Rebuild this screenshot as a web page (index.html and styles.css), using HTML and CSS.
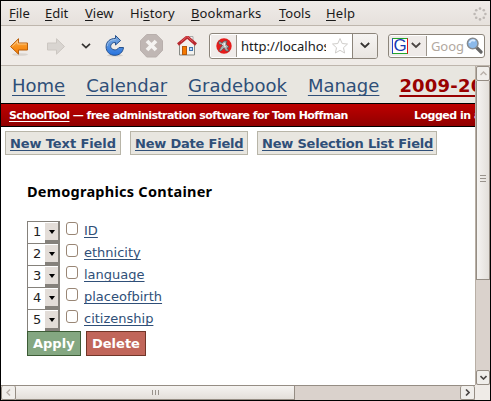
FILE: index.html
```html
<!DOCTYPE html>
<html lang="en">
<head>
<meta charset="utf-8">
<title>Demographics Container</title>
<link rel="stylesheet" href="styles.css">
</head>
<body>
<div class="window">
  <div class="menubar">
    <span class="m-file"><u>F</u>ile</span><span class="m-edit"><u>E</u>dit</span><span class="m-view"><u>V</u>iew</span><span class="m-history">Hi<u>s</u>tory</span><span class="m-bookmarks"><u>B</u>ookmarks</span><span class="m-tools"><u>T</u>ools</span><span class="m-help"><u>H</u>elp</span>
    <svg class="throbber" width="14" height="14" viewBox="-7 -7 14 14"><g fill="#bdb8b4"><circle cy="-5.4" r="1.3"/><circle cx="3.8" cy="-3.8" r="1.3"/><circle cx="5.4" r="1.3"/><circle cx="3.8" cy="3.8" r="1.3"/><circle cy="5.4" r="1.3"/><circle cx="-3.8" cy="3.8" r="1.3"/><circle cx="-5.4" r="1.3"/><circle cx="-3.8" cy="-3.8" r="1.3"/></g></svg>
  </div>
  <div class="toolbar">
    <svg class="nav-icons" width="200" height="39" viewBox="1 26 200 39">
      <defs>
        <linearGradient id="or" x2="0" y2="1"><stop stop-color="#fdb55b"/><stop offset=".5" stop-color="#f8921e"/><stop offset="1" stop-color="#f57900"/></linearGradient>
        <linearGradient id="bl" x2="0" y2="1"><stop stop-color="#83aede"/><stop offset="1" stop-color="#2673e0"/></linearGradient>
      </defs>
      <ellipse cx="20" cy="54.5" rx="8" ry="1.3" fill="#d9d4cf"/>
      <path d="M10.5 46.5L18.5 38.7V43H27.5V50H18.5V54.2Z" fill="url(#or)" stroke="#b85f0c" stroke-linejoin="round"/>
      <path d="M12.3 46.3L17.6 41.2V44H26.5" fill="none" stroke="#fdcf92" stroke-width=".8"/>
      <path d="M64.500 46.500L56.500 38.700V43H47.500V50H56.500V54.200Z" fill="#d9d5d1" stroke="#ccc7c2" stroke-linejoin="round"/>
      <path d="M82 43.800L86 47.600L90 43.800" fill="none" stroke="#353331" stroke-width="1.700"/>
      <ellipse cx="115" cy="55.300" rx="8" ry="1.200" fill="#d4cfca"/>
      <path d="M115.500 35.500L120.600 40.500L115.500 45V42.500C112 42 110.500 44.800 110.700 46.500C111 50 116.500 51.500 119 47.500H123.500C123 52.500 119 55.300 115 55.300C109.500 55.300 106 51.500 106.100 46.700C106.200 41.500 110 38.500 115.500 38.400Z" fill="url(#bl)" stroke="#28528d" stroke-linejoin="round"/>
      <path d="M107.300 46C107.600 42 110.500 39.700 116 39.500" fill="none" stroke="#a6c4e7" stroke-width=".8"/>
      <path d="M146.700 34.500H156.300L162.500 40.700V50.300L156.300 57H146.700L140.500 50.300V40.700Z" fill="#c0b7b4" stroke="#b8afac"/>
      <path d="M147 41L156 50M156 41L147 50" stroke="#f5f3f1" stroke-width="3.800"/>
      <path d="M189.500 41V36.500H193V43" fill="#f3f3f1" stroke="#aaa"/>
      <path d="M179.500 44L187 38L194.500 44V55H179.500Z" fill="#f3f2ef" stroke="#888a85"/>
      <path d="M178 44.500L186.500 37.500H188L196 44.500" fill="none" stroke="#b9282e" stroke-width="3"/>
      <path d="M181 41.800L186.500 37H188L193 41.800" fill="none" stroke="#e05a5e"/>
      <rect x="182.500" y="46.500" width="4" height="8" fill="#f57900" stroke="#b65a0c"/>
      <rect x="189.500" y="47.500" width="3" height="3" fill="#b7d8fa" stroke="#3f74ad"/>
    </svg>
    <div class="address">
      <div class="favicon"><svg width="16" height="16" viewBox="0 0 16 16"><circle cx="8" cy="8" r="7.700" fill="#e51c1c"/><path d="M3 3L6 5L8 3L11 3L10 6L13 9L11 10L13 13L10 13L8 10L5 13L3 13L5 9L7 7L3 6Z" fill="#aaa" stroke="#555" stroke-width=".7"/><path d="M6 7L9 5L8 8L10 9" fill="none" stroke="#eee"/></svg></div>
      <span class="url">http://localhost</span>
      <svg class="star" width="18" height="18" viewBox="0 0 18 18"><path d="M9 1.500L11.200 6.500L16.500 7L12.500 10.700L13.600 16L9 13.300L4.400 16L5.500 10.700L1.500 7L6.800 6.500Z" fill="#fff" stroke="#cfcdca"/></svg>
      <div class="drop"><svg width="10" height="7" viewBox="0 0 10 7"><path d="M.8 1L5 5L9.200 1" fill="none" stroke="#353331" stroke-width="1.800"/></svg></div>
    </div>
    <div class="search">
      <div class="engine">
        <span class="glogo">G</span>
        <svg width="10" height="7" viewBox="0 0 10 7"><path d="M.8 1L5 5L9.200 1" fill="none" stroke="#4a4543" stroke-width="1.800"/></svg>
      </div>
      <span class="hint">Goog</span>
      <svg class="lens" width="17" height="17" viewBox="0 0 17 17"><path d="M10.500 10.500L15 15" stroke="#666" stroke-width="3.200" stroke-linecap="round"/><circle cx="6.700" cy="6.500" r="5.300" fill="#8bb9ea" stroke="#858a90" stroke-width="1.500"/><path d="M3.500 6C4 3.500 7 2.500 9 4" fill="none" stroke="#d9eaff" stroke-width="1.800"/></svg>
    </div>
  </div>
  <div class="viewport">
    <div class="page">
      <div class="sections"><a class="s-home">Home</a><a class="s-cal">Calendar</a><a class="s-grade">Gradebook</a><a class="s-manage">Manage</a><a class="s-year">2009-2010</a></div>
      <div class="banner"><span class="tagline"><a>SchoolTool</a> — free administration software for Tom Hoffman</span><span class="login">Logged in as</span></div>
      <div class="actions"><div class="action a-text"><a>New Text Field</a></div><div class="action a-date"><a>New Date Field</a></div><div class="action a-list"><a>New Selection List Field</a></div></div>
      <div class="content">
        <h1><span>Demographics Container</span></h1>
        <div class="row"><div class="select"><span>1</span><i></i></div><b class="check"></b><a class="l-id">ID</a></div>
        <div class="row"><div class="select"><span>2</span><i></i></div><b class="check"></b><a>ethnicity</a></div>
        <div class="row"><div class="select"><span>3</span><i></i></div><b class="check"></b><a>language</a></div>
        <div class="row"><div class="select"><span>4</span><i></i></div><b class="check"></b><a>placeofbirth</a></div>
        <div class="row"><div class="select"><span>5</span><i></i></div><b class="check"></b><a>citizenship</a></div>
        <div class="buttons"><div class="apply">Apply</div><div class="delete">Delete</div></div>
      </div>
    </div>
    <div class="vscroll">
      <div class="step up"><svg width="7" height="5" viewBox="0 0 7 5"><path d="M.5 4L3.500 1L6.500 4" fill="none" stroke="#b9b1aa" stroke-width="1.400"/></svg></div>
      <div class="vthumb"><svg width="6" height="7" viewBox="0 0 6 7"><path d="M0 .5H6M0 3.500H6M0 6.500H6" stroke="#99938c"/></svg></div>
      <div class="step down"><svg width="7" height="5" viewBox="0 0 7 5"><path d="M.5 1L3.500 4L6.500 1" fill="none" stroke="#4a4644" stroke-width="1.600"/></svg></div>
    </div>
  </div>
  <div class="bottom">
    <div class="hscroll">
      <div class="step left"><svg width="5" height="7" viewBox="0 0 5 7"><path d="M4 .5L1 3.500L4 6.500" fill="none" stroke="#b9b1aa" stroke-width="1.400"/></svg></div>
      <div class="hthumb"><svg width="7" height="5" viewBox="0 0 7 5"><path d="M.5 0V5M3.500 0V5M6.500 0V5" stroke="#99938c"/></svg></div>
      <div class="step right"><svg width="5" height="7" viewBox="0 0 5 7"><path d="M1 .5L4 3.500L1 6.500" fill="none" stroke="#4a4644" stroke-width="1.600"/></svg></div>
    </div>
  </div>
</div>
</body>
</html>
```
FILE: styles.css
```css
* { box-sizing: border-box; }
body { margin: 0; overflow: hidden; }
svg { display: block; flex: none; }
.window { width: 491px; height: 401px; border: 1px solid #000; background: #efebe7; display: flex; flex-direction: column; overflow: hidden; }

.menubar { height: 25px; flex: none; display: flex; align-items: center; padding-left: 8px; border-bottom: 1px solid #beb6ad; background: linear-gradient(#efebe8, #e6e1dc); font: 13px/24px "Noto Sans", sans-serif; color: #1a1a1a; }
.menubar span { flex: none; white-space: nowrap; }
.menubar u { text-underline-offset: 2px; text-decoration-thickness: 1px; text-decoration-skip-ink: none; }
.m-file { width: 36px; }
.m-edit { width: 40px; }
.m-view { width: 45px; }
.m-history { width: 61px; letter-spacing: .15px; }
.m-bookmarks { width: 88px; letter-spacing: .15px; }
.m-tools { width: 47px; }
.m-help { width: 40px; letter-spacing: .2px; }
.throbber { margin: 1px 3px 0 auto; }

.toolbar { height: 40px; flex: none; display: flex; align-items: center; border-bottom: 1px solid #beb6ad; background: #efebe7; }
.address { display: flex; align-items: center; width: 169px; height: 26px; margin-left: 8px; border: 1px solid #8c857b; border-radius: 3px; background: #fff; overflow: hidden; }
.favicon { width: 26px; height: 22px; margin-left: 1px; flex: none; display: flex; align-items: center; justify-content: center; border-right: 1px solid #9c958c; background: #f0ecea; }
.url { width: 85px; margin-left: 4px; flex: none; overflow: hidden; white-space: nowrap; font: 13px/22px "Noto Sans", sans-serif; color: #1a1a1a; }
.star { margin-left: 5px; }
.drop { margin-left: auto; width: 25px; height: 24px; flex: none; display: flex; align-items: center; justify-content: center; border-left: 1px solid #8c857b; background: linear-gradient(#f6f4f2, #e9e5e1); }
.search { display: flex; align-items: center; width: 97px; height: 24px; margin-left: 10px; border: 1px solid #8c857b; border-radius: 3px; background: #fff; overflow: hidden; }
.engine { display: flex; align-items: center; gap: 3px; width: 38px; height: 20px; padding-left: 3px; flex: none; border-right: 1px solid #9c958c; background: #efebe9; }
.glogo { width: 16px; height: 16px; flex: none; border: 1px solid; border-color: #24a52b #e41313 #24a52b #2644ca; background: #fff; color: #1739b3; font: 17px/14px "Liberation Sans", sans-serif; text-align: center; }
.hint { width: 33px; margin-left: 4px; font: 13px/22px "Noto Sans", sans-serif; letter-spacing: -.1px; color: #b1a8a0; }
.lens { margin-left: 2px; }

.viewport { height: 319px; flex: none; display: flex; }
.page { width: 474px; flex: none; overflow: hidden; background: #fff; font-family: "DejaVu Sans", sans-serif; }
.page a { text-decoration: underline; text-decoration-skip-ink: none; text-decoration-thickness: 1px; color: #2f4f78; }
.sections { height: 37px; display: flex; padding-left: 11px; background: #e8e6e0; font-size: 18px; line-height: 40px; white-space: nowrap; }
.sections a { flex: none; text-underline-offset: 3px; }
.s-home, .s-cal, .s-grade { margin-right: 21px; }
.s-manage { margin-right: 20px; }
.sections .s-year { color: #990000; font-weight: bold; text-decoration-thickness: 2px; letter-spacing: .2px; }
.banner { height: 24px; display: flex; border: solid #000; border-width: 1px 0; background: linear-gradient(#be0000, #900000); color: #fff; font-size: 11px; font-weight: bold; line-height: 23px; white-space: nowrap; }
.banner a { color: #fff; text-underline-offset: 2px; }
.tagline { width: 413px; flex: none; padding-left: 8px; letter-spacing: -.56px; }
.login { flex: none; letter-spacing: -.5px; }
.actions { display: flex; padding: 4px 0 0 4px; }
.action { height: 24px; border: 1px solid #b8b5a8; background: #e8e6e0; padding-left: 4px; font-size: 13px; font-weight: bold; line-height: 23px; letter-spacing: -.2px; white-space: nowrap; }
.action a { text-underline-offset: 2px; }
.a-text { width: 116px; margin-right: 9px; letter-spacing: -.1px; }
.a-date { width: 118px; margin-right: 9px; }
.a-list { width: 180px; }
.content { padding: 26px 0 0 26px; }
h1 { margin: 0 0 20px; height: 20px; font: bold 14.500px/20px "Noto Sans", sans-serif; letter-spacing: .26px; color: #000; }
.row { height: 22px; display: flex; align-items: flex-start; }
.select { width: 33px; height: 23px; flex: none; display: flex; border: 1px solid #85817b; border-right-width: 2px; background: #fff; font-size: 13px; line-height: 20px; color: #222; }
.select span { width: 17px; padding-left: 5px; flex: none; }
.select i { width: 13px; height: 21px; flex: none; display: flex; align-items: center; justify-content: center; background: #e3ddd8; border-bottom: 3px solid #85817b; border-top: 1px solid #fff; }
.select i::before { content: ""; margin: 0 0 0 1px; border: 3px solid transparent; border-top: 4px solid #000; border-bottom: 0; }
.check { width: 12px; height: 13px; margin: 1px 6px 0; flex: none; border: 1px solid #998675; border-radius: 3px; background: #fff; }
.row a { font-size: 13px; line-height: 20px; text-underline-offset: 2px; }
.buttons { display: flex; gap: 5px; font-size: 13px; font-weight: bold; line-height: 23px; color: #fff; }
.buttons div { height: 25px; padding-left: 5px; }
.apply { width: 54px; border: 1px solid #3c5b35; background: #84a781; }
.delete { width: 60px; border: 1px solid #713528; background: #c1665a; }

.vscroll { width: 15px; flex: none; display: flex; flex-direction: column; border-left: 1px solid #b8afa5; background: #dad2cc; }
.step { width: 14px; height: 15px; flex: none; display: flex; align-items: center; justify-content: center; border: 1px solid #958d84; border-radius: 2px; background: #f0eeeb; }
.vthumb { height: 199px; display: flex; align-items: center; justify-content: center; border: 1px solid #958d84; border-top: 0; background: linear-gradient(90deg, #f5f3f1, #e3dfda); }
.vthumb svg { margin-top: -3px; }
.down { margin-top: auto; }
.bottom { height: 15px; flex: none; background: #efebe7; }
.hscroll { width: 474px; height: 15px; display: flex; border-top: 1px solid #958d84; background: #dad2cc; }
.hscroll .step { width: 15px; height: 14px; border-top: 0; }
.hthumb { width: 279px; display: flex; align-items: center; justify-content: center; border: 1px solid #958d84; border-width: 0 1px 1px 0; background: linear-gradient(#f5f3f1, #e3dfda); }
.hscroll .right { margin-left: auto; }
```
